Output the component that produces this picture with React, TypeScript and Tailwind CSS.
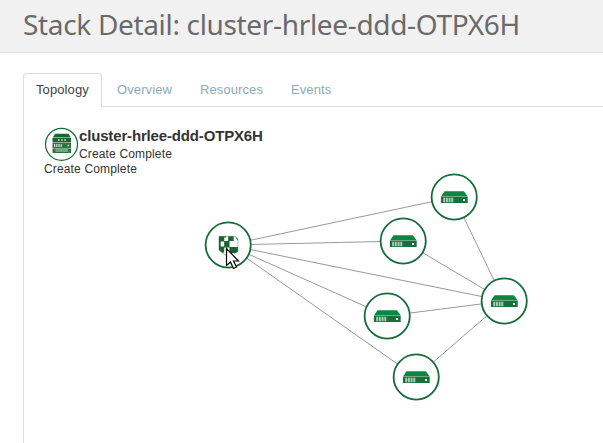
import React from "react";

type Point = { x: number; y: number };

const servers: Point[] = [
  { x: 454, y: 197 },
  { x: 403, y: 241 },
  { x: 387, y: 316 },
  { x: 416, y: 377 },
  { x: 504, y: 301 },
];
const group: Point = { x: 228, y: 245 };
const hub = servers[4];

function Server({ x, y }: Point) {
  return (
    <g transform={`translate(${x + 0.2} ${y})`}>
      <circle r="22.6" fill="#fff" stroke="#156c38" strokeWidth="1.8" />
      <path d="M-9.7 -5.7H9.7L13.2 -1H-12.9Z" fill="#0b8743" />
      <path d="M-13.3 -.6H13.5V6H-13.3Z" fill="#16703a" />
      <path d="M-11 .7h2v4.5h-2zM-8.3 .7h2v4.5h-2zM-5.6 .7h2v4.5h-2zM-2.9 .7h2v4.5h-2z" fill="#a9c9b3" />
      <path d="M8.8 2h2v2h-2z" fill="#fff" />
    </g>
  );
}

function Shield({ x, y }: Point) {
  return (
    <g transform={`translate(${x + 0.2} ${y})`}>
      <circle r="22.6" fill="#fff" stroke="#156c38" strokeWidth="1.8" />
      <path d="M-9 -8.7H7.5L9.7 -6V6Q7 9 0 11Q-6 9 -9 5Z" fill="#fff" stroke="#7fab8e" strokeWidth=".7" />
      <path d="M-9.3 -8.7H-4V-3.5H-9.3ZM-4 -8.7H-2V-7.5H-4ZM0 -8.7H5.5V-4H0ZM-4 -4H1.3V2.5H-4ZM-9.3 -3.5H-7.5V2H-9.3ZM-9.3 1.5H-4V7.5L-6 7.8L-9.3 5ZM1.3 2H9.7V7L7 8H1.3ZM6.5 -8.7L9.7 -6V-4.5Z" fill="#1c632f" />
    </g>
  );
}

function StackIcon() {
  return (
    <svg className="block h-[35px] w-[35px] shrink-0" viewBox="0 0 35 35">
      <circle cx="17.5" cy="17.3" r="16" fill="#fff" stroke="#156c38" strokeWidth="1.2" />
      <path d="M11 6.8H24.5L26.8 10.5H8.8Z" fill="#1c632f" />
      <path d="M8.5 11H27V15.5H8.5Z" fill="#1c632f" />
      <path d="M14 12.3h1.4v1.4H14zM17.2 12.3h1.4v1.4h-1.4zM20.4 12.3h1.4v1.4h-1.4z" fill="#fff" />
      <path d="M8.5 16H27V21H8.5Z" fill="#28783f" />
      <path d="M10 17h1.2v3H10zM12.2 17h1.2v3h-1.2zM14.4 17h1.2v3h-1.2zM16.6 17h1.2v3h-1.2zM23.6 17.8h1.5v1.5h-1.5z" fill="#cfe2d4" />
      <path d="M8.5 21.4H27V26H8.5Z" fill="#28783f" />
      <path d="M11.5 22H24V25H11.5Z" fill="#70a780" />
    </svg>
  );
}

export default function App() {
  return (
    <div className="relative h-[443px] w-[603px] overflow-hidden bg-white font-['Liberation_Sans',Arial,sans-serif] text-[#333]">
      <header className="h-[53px] border-b border-[#e3e3e3] bg-[#f1f1f1] pl-[23px]">
        <h1 className="whitespace-nowrap font-['Noto_Sans',sans-serif] text-[28px] leading-[48px] tracking-[-0.33px] text-[#6a6a6a]">
          Stack Detail: cluster-hrlee-ddd-OTPX6H
        </h1>
      </header>
      <nav className="ml-[23px] mt-5 flex h-[34px] border-b border-[#ddd] text-[13px] leading-[18px] text-[#8aabb8]">
        <span className="h-[34px] w-[79px] rounded-t border border-b-0 border-[#ddd] bg-white pl-3 pt-[7px] tracking-[0.1px] text-[#444]">Topology</span>
        <span className="w-[83px] pl-[15px] pt-2 tracking-[0.1px]">Overview</span>
        <span className="w-[91px] pl-[15px] pt-2 tracking-[0.1px]">Resources</span>
        <span className="pl-[15px] pt-2 tracking-[0.1px]">Events</span>
      </nav>
      <main className="ml-[23px] h-[336px] border-l border-[#ddd] pl-5 pt-5">
        <div className="flex h-[35px]">
          <StackIcon />
          <div className="whitespace-nowrap">
            <h3 className="text-[15px] font-bold leading-[18px] tracking-[-0.16px]">cluster-hrlee-ddd-OTPX6H</h3>
            <p className="text-[12px] leading-[18px] tracking-[0.15px]">Create Complete</p>
          </div>
        </div>
        <p className="text-[12px] leading-[14px] tracking-[0.15px]">Create Complete</p>
      </main>
      <svg className="pointer-events-none absolute left-0 top-0 h-[443px] w-[603px]" viewBox="0 0 603 443">
        <g stroke="#999">
          {servers.map((s) => (
            <line key={`g${s.x}`} x1={group.x} y1={group.y} x2={s.x} y2={s.y} />
          ))}
          {servers.slice(0, 4).map((s) => (
            <line key={`h${s.x}`} x1={s.x} y1={s.y} x2={hub.x} y2={hub.y} />
          ))}
        </g>
        {servers.map((s) => (
          <Server key={s.x} {...s} />
        ))}
        <Shield {...group} />
        <path d="M226.5 248.5V265.5L230.5 262L233.5 268.5L236.5 267L233.5 261H238.5Z" fill="#fff" stroke="#000" strokeWidth="1.2" />
      </svg>
    </div>
  );
}
